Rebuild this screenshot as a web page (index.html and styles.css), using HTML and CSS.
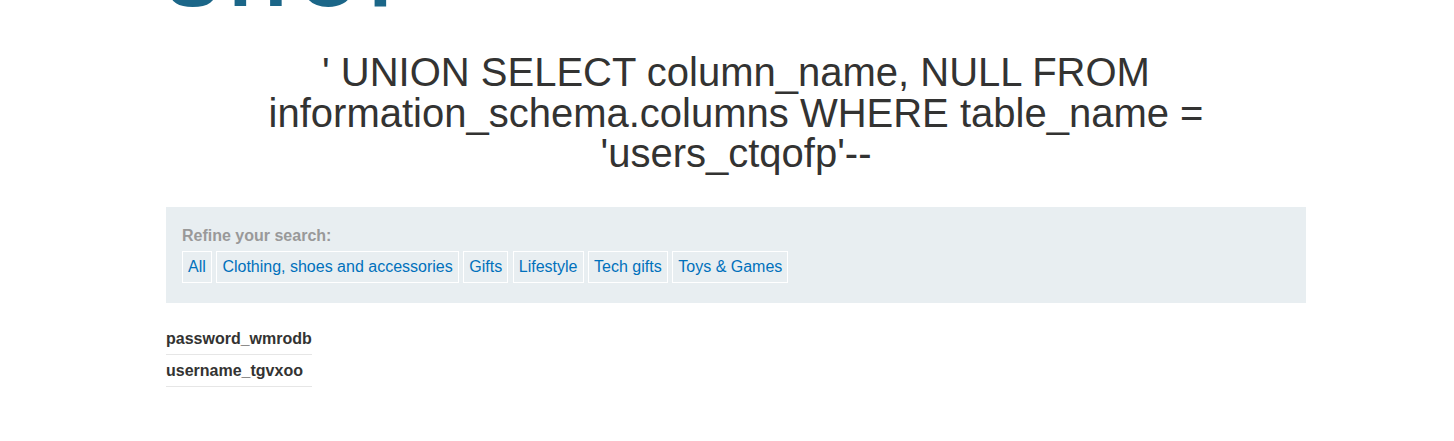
FILE: index.html
```html
<!DOCTYPE html>
<html lang="en">
<head>
<meta charset="utf-8">
<title>Shop</title>
<link rel="stylesheet" href="styles.css">
</head>
<body>
<div class="container">
  <header class="hero"><div class="hero-text">SHOP</div></header>
  <h1 class="title">' UNION SELECT column_name, NULL FROM information_schema.columns WHERE table_name = 'users_ctqofp'--</h1>
  <section class="filter">
    <div class="filter-label">Refine your search:</div>
    <div class="filter-links">
      <a class="filter-link" href="#">All</a>
      <a class="filter-link" href="#">Clothing, shoes and accessories</a>
      <a class="filter-link" href="#">Gifts</a>
      <a class="filter-link" href="#">Lifestyle</a>
      <a class="filter-link" href="#">Tech gifts</a>
      <a class="filter-link" href="#">Toys &amp; Games</a>
    </div>
  </section>
  <table class="results">
    <tbody>
      <tr><th>password_wmrodb</th></tr>
      <tr><th>username_tgvxoo</th></tr>
    </tbody>
  </table>
</div>
</body>
</html>
```

FILE: styles.css
```css
html, body {
  margin: 0;
  padding: 0;
  background: #ffffff;
}
body {
  font-family: "Liberation Sans", Arial, sans-serif;
  color: #333332;
}
.container {
  width: 1140px;
  margin-left: 166px;
}
.hero {
  height: 9px;
  overflow: hidden;
}
.hero-text {
  margin-top: -52px;
  font-size: 80px;
  line-height: 61px;
  font-weight: bold;
  letter-spacing: 10px;
  color: #1b6688;
  white-space: nowrap;
}
.title {
  margin: 43px 0 0;
  font-size: 40px;
  line-height: 40.5px;
  font-weight: normal;
  text-align: center;
  color: #333332;
  padding: 0 60px;
}
.filter {
  margin-top: 33px;
  background: #e8eef1;
  padding: 19px 16px 20px;
}
.filter-label {
  font-size: 16px;
  font-weight: bold;
  color: #999999;
  line-height: 20px;
  margin-bottom: 5px;
}
.filter-links {
  display: flex;
  gap: 4.6px;
}
.filter-link {
  display: block;
  border: 1px solid #ffffff;
  padding: 0 5px;
  height: 30px;
  line-height: 30px;
  font-size: 16px;
  color: #0071bc;
  text-decoration: none;
}
.results {
  margin-top: 20px;
  border-collapse: collapse;
}
.results th {
  text-align: left;
  font-size: 16px;
  font-weight: bold;
  color: #333332;
  padding: 6px 0 5px;
  line-height: 20px;
  border-bottom: 1px solid #e6e6e6;
}
```
